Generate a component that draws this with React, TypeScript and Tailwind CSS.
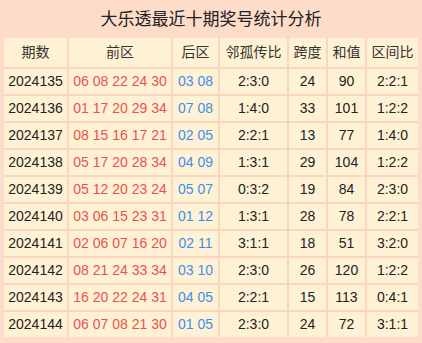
const ROWS = [
  ['2024135', '06 08 22 24 30', '03 08', '2:3:0', '24', '90', '2:2:1'],
  ['2024136', '01 17 20 29 34', '07 08', '1:4:0', '33', '101', '1:2:2'],
  ['2024137', '08 15 16 17 21', '02 05', '2:2:1', '13', '77', '1:4:0'],
  ['2024138', '05 17 20 28 34', '04 09', '1:3:1', '29', '104', '1:2:2'],
  ['2024139', '05 12 20 23 24', '05 07', '0:3:2', '19', '84', '2:3:0'],
  ['2024140', '03 06 15 23 31', '01 12', '1:3:1', '28', '78', '2:2:1'],
  ['2024141', '02 06 07 16 20', '02 11', '3:1:1', '18', '51', '3:2:0'],
  ['2024142', '08 21 24 33 34', '03 10', '2:3:0', '26', '120', '1:2:2'],
  ['2024143', '16 20 22 24 31', '04 05', '2:2:1', '15', '113', '0:4:1'],
  ['2024144', '06 07 08 21 30', '01 05', '2:3:0', '24', '72', '3:1:1'],
]

const HEAD = ['期数', '前区', '后区', '邻孤传比', '跨度', '和值', '区间比']

export default function App() {
  return (
    <div
      className="w-[422px] h-[343px] bg-[#fddcca] px-[4px] text-[#222]"
      style={{ fontFamily: '"Liberation Sans", "Noto Sans CJK SC", sans-serif' }}
    >
      <div className="h-[38px] flex items-center justify-center text-[17px] text-[#222] pt-[2px]">
        大乐透最近十期奖号统计分析
      </div>
      <div className="grid grid-cols-[63px_102px_45px_67px_37px_37px_51px] grid-rows-[29px] auto-rows-[25px] gap-[2px] bg-[#fbd6bf] text-[14px]">
        {HEAD.map((h) => (
          <div key={h} className="bg-[#fff2d4] flex items-center justify-center text-[#333]">
            {h}
          </div>
        ))}
        {ROWS.map((r) =>
          r.map((c, i) => (
            <div
              key={r[0] + i}
              className={`bg-[#fff2d4] flex items-center justify-center ${
                i === 1 ? 'text-[#e8524d]' : i === 2 ? 'text-[#3d8fef]' : 'text-[#222]'
              }`}
            >
              {c}
            </div>
          ))
        )}
      </div>
    </div>
  )
}
